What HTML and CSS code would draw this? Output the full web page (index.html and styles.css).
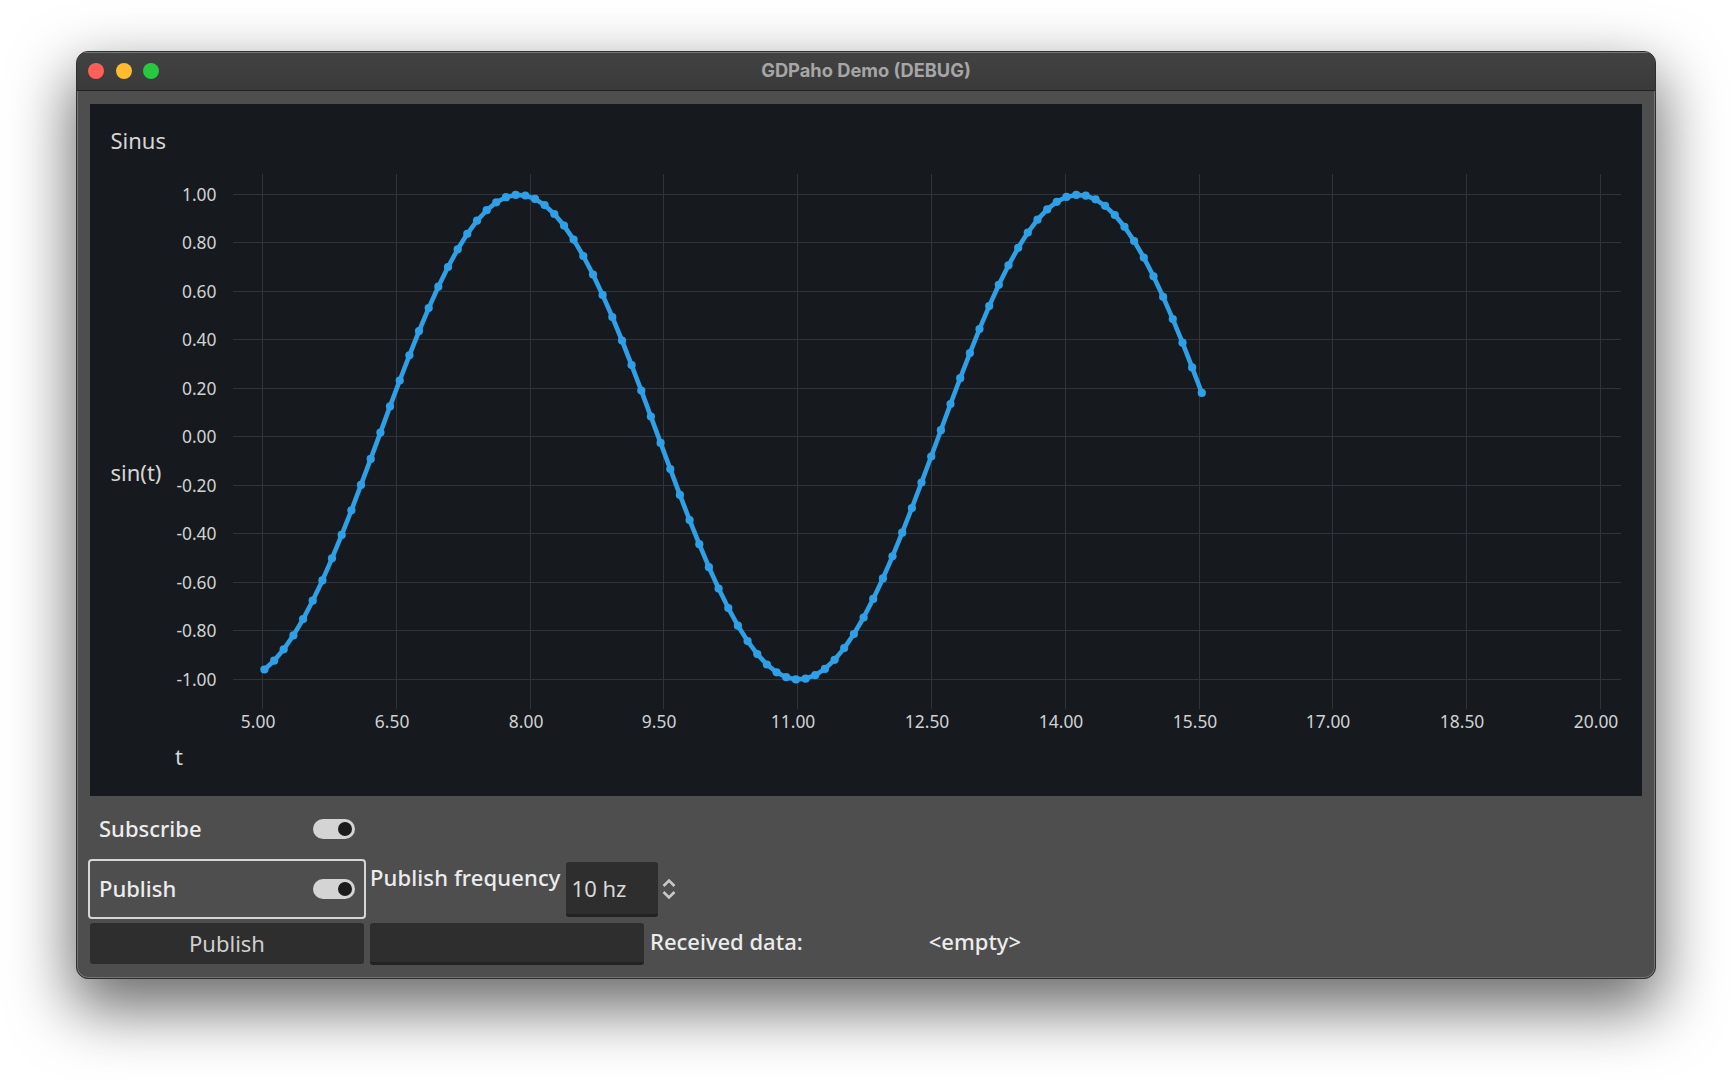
FILE: index.html
```html
<!DOCTYPE html>
<html lang="en">
<head>
    <meta charset="UTF-8">
    <title>GDPaho Demo (DEBUG)</title>
    <link rel="stylesheet" href="styles.css">
</head>
<body>

    <div class="window">
        <div class="titlebar">
            <div class="lights">
                <span class="light light-red"></span>
                <span class="light light-yellow"></span>
                <span class="light light-green"></span>
            </div>
            <div class="title">GDPaho Demo (DEBUG)</div>
        </div>

        <div class="content">
            <div class="chart-panel">
                <svg id="chart" class="chart" width="1551" height="692" viewBox="0 0 1551 692"></svg>
            </div>

            <div class="controls">
                <div class="row">
                    <div class="check-button">
                        <span>Subscribe</span>
                        <span class="switch"><span class="knob"></span></span>
                    </div>
                </div>

                <div class="row">
                    <div class="check-button focused">
                        <span>Publish</span>
                        <span class="switch"><span class="knob"></span></span>
                    </div>
                    <div class="freq-label">Publish frequency</div>
                    <div class="spinbox">10 hz</div>
                    <svg class="stepper" width="16" height="22" viewBox="0 0 16 22">
                        <path d="M2.5 8 L8 2.5 L13.5 8 M2.5 14 L8 19.5 L13.5 14"></path>
                    </svg>
                </div>

                <div class="row row-bottom">
                    <div class="button">Publish</div>
                    <div class="text-input"></div>
                    <div class="received-label">Received data:</div>
                    <div class="received-value">&lt;empty&gt;</div>
                </div>
            </div>
        </div>
    </div>

    <script src="chart.js"></script>

</body>
</html>
```

FILE: styles.css
```css
html {
    height: 100%;
}
body {
    box-sizing: border-box;
    height: 1080px;
    margin: 0;
    padding: 51px 0 0 76px;
    overflow: hidden;
    background-color: #ffffff;
    font-family: "Noto Sans", sans-serif;
    font-size: 22px;
    color: #ececec;
}
.window {
    box-sizing: border-box;
    width: 1580px;
    height: 928px;
    background-color: #4e4e4e;
    border: 1px solid #2f2f2f;
    border-radius: 12px;
    overflow: hidden;
    box-shadow: 0 26px 62px 4px rgba(0, 0, 0, 0.58), inset 0 0 0 1px #737373;
}
.titlebar {
    box-sizing: border-box;
    position: relative;
    height: 39px;
    padding-bottom: 4px;
    display: flex;
    align-items: center;
    justify-content: center;
    background: linear-gradient(#424242, #3a3a3a);
    border-top: 1px solid #777777;
    border-bottom: 1px solid #222222;
}
.lights {
    position: absolute;
    left: 11px;
    top: 10px;
    display: flex;
    gap: 11.5px;
}
.light {
    width: 16px;
    height: 16px;
    border-radius: 50%;
}
.light-red {
    background-color: #ff5f57;
}
.light-yellow {
    background-color: #febc2e;
}
.light-green {
    background-color: #28c840;
}
.title {
    font-family: Inter, sans-serif;
    font-size: 18.3px;
    font-weight: 700;
    color: #a6a6a6;
}
.content {
    padding: 13px 13px 0 13px;
}
.chart-panel {
    height: 692px;
    background-color: #161a1f;
}
.chart {
    display: block;
}
.grid-line {
    stroke: #2e343c;
    stroke-width: 1;
}
.tick {
    font-family: "Noto Sans", sans-serif;
    font-size: 17.4px;
    fill: #d2d2d2;
}
.axis-title {
    font-family: "Noto Sans", sans-serif;
    font-size: 22px;
    fill: #d6d6d6;
}
.curve {
    fill: none;
    stroke: #2f9fe6;
    stroke-width: 4.6;
    stroke-linejoin: round;
}
.dot {
    fill: #2f9fe6;
}
.controls {
    display: flex;
    flex-direction: column;
    gap: 4px;
    margin-top: 5px;
}
.row {
    display: flex;
    align-items: center;
    height: 56px;
}
.row-bottom {
    height: 42px;
    margin-top: 2px;
    align-items: flex-start;
}
.check-button {
    box-sizing: border-box;
    width: 274px;
    height: 56px;
    padding: 0 9px 2px 9px;
    display: flex;
    align-items: center;
    justify-content: space-between;
    font-weight: 500;
    border-radius: 2px;
}
.focused {
    outline: 2px solid #d6d6d6;
}
.switch {
    width: 42px;
    height: 20px;
    margin-top: 2px;
    display: flex;
    align-items: center;
    justify-content: flex-end;
    padding-right: 3px;
    box-sizing: border-box;
    background-color: #d4d4d4;
    border-radius: 10px;
}
.knob {
    width: 14px;
    height: 14px;
    border-radius: 50%;
    background-color: #1c1c1c;
}
.freq-label {
    align-self: flex-start;
    margin-left: 6px;
    line-height: 32px;
    font-weight: 500;
    letter-spacing: 0.12px;
}
.spinbox {
    box-sizing: border-box;
    width: 92px;
    height: 55px;
    margin-left: 5px;
    padding-left: 6px;
    display: flex;
    align-items: center;
    background-color: #2e2e2e;
    border-bottom: 3px solid #222222;
    border-radius: 3px;
    color: #d8d8d8;
}
.stepper {
    margin-left: 3px;
}
.stepper path {
    fill: none;
    stroke: #c8c8c8;
    stroke-width: 2.6;
}
.button {
    width: 274px;
    height: 41px;
    line-height: 41px;
    text-align: center;
    background-color: #2e2e2e;
    border-radius: 3px;
    color: #d0d0d0;
}
.text-input {
    box-sizing: border-box;
    width: 274px;
    height: 42px;
    margin-left: 6px;
    background-color: #2e2e2e;
    border-bottom: 3px solid #222222;
    border-radius: 3px;
}
.received-label {
    margin-left: 6px;
    line-height: 36px;
    font-weight: 500;
}
.received-value {
    margin-left: 126px;
    line-height: 36px;
    font-weight: 500;
}
```

FILE: chart.js
```js
// plot area, relative to the panel
const left = 172, stepX = 133.8;
const top1 = 90, stepY = 48.47;
const svg = document.getElementById('chart');
const NS = 'http://www.w3.org/2000/svg';

function add(tag, attrs, text) {
    const el = document.createElementNS(NS, tag);
    for (const k in attrs) el.setAttribute(k, attrs[k]);
    if (text) el.textContent = text;
    svg.appendChild(el);
    return el;
}

// the curve sits a little off the grid in the original
function px(t) { return left + 2.4 + (t - 5) / 1.5 * 133.6; }
function py(v) { return top1 + 0.8 + (1 - v) / 0.2 * stepY; }

// grid and tick labels
for (let i = 0; i <= 10; i++) {
    const x = Math.round(left + i * stepX) + 0.5;
    add('line', { class: 'grid-line', x1: x, x2: x, y1: 70, y2: 605 });
    add('text', { class: 'tick', x: x - 4.4, y: 624, 'text-anchor': 'middle' }, (5 + i * 1.5).toFixed(2));
}
for (let i = 0; i <= 10; i++) {
    const y = Math.round(top1 + i * stepY) + 0.5;
    const label = (1 - i * 0.2).toFixed(2);
    add('line', { class: 'grid-line', x1: 143, x2: 1531, y1: y, y2: y });
    add('text', { class: 'tick', x: 126.5, y: y + 6, 'text-anchor': 'end' }, label);
}

add('text', { class: 'axis-title', x: 20.5, y: 45 }, 'Sinus');
add('text', { class: 'axis-title', x: 20.5, y: 377 }, 'sin(t)');
add('text', { class: 'axis-title', x: 85, y: 661 }, 't');

// sine samples
const pts = [];
for (let t = 5; t <= 15.54; t += 0.1085) {
    pts.push([px(t).toFixed(1), py(Math.sin(t)).toFixed(1)]);
}
add('polyline', { class: 'curve', points: pts.map(p => p.join(',')).join(' ') });
pts.forEach(p => add('circle', { class: 'dot', cx: p[0], cy: p[1], r: 4.1 }));
```
